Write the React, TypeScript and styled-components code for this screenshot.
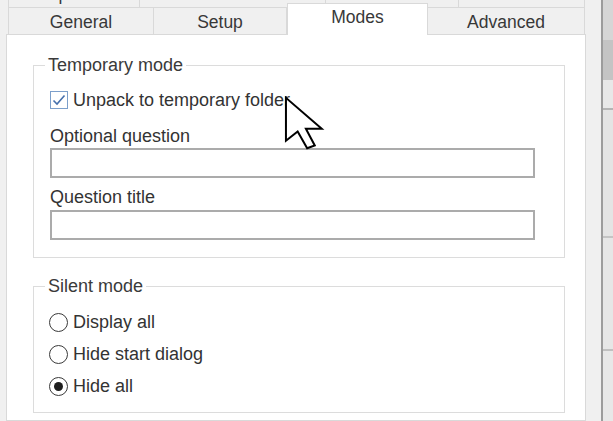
import styled, { createGlobalStyle } from 'styled-components';

const GlobalStyle = createGlobalStyle`
  html, body {
    margin: 0;
    padding: 0;
    background: #f0f0f0;
  }
  body {
    font-family: 'Liberation Sans', Arial, sans-serif;
    color: #333;
  }
`;

const Window = styled.div`
  position: relative;
  width: 613px;
  height: 421px;
  overflow: hidden;
  display: flex;
  box-sizing: border-box;
  padding-left: 6px;
  background: #f0f0f0;
`;

const TabControl = styled.div`
  width: 582px;
  display: flex;
  flex-direction: column;
`;

const TabRow = styled.div<{ $top?: boolean }>`
  display: flex;
  align-items: flex-end;
  padding-left: 2px;
  height: ${({ $top }) => ($top ? '22px' : '27px')};
  margin-top: ${({ $top }) => ($top ? '-15px' : '0')};
  position: relative;
  z-index: 1;
`;

const Tab = styled.div<{ $width: number; $active?: boolean; $top?: boolean }>`
  width: ${({ $width }) => $width}px;
  height: ${({ $active }) => ($active ? '32px' : '100%')};
  margin-bottom: ${({ $active }) => ($active ? '-1px' : '0')};
  padding: ${({ $active, $top }) =>
    $active ? '0 0 4px 0' : $top ? '0 0 5px 0' : '3px 0 0 0'};
  box-sizing: border-box;
  display: flex;
  align-items: center;
  justify-content: center;
  font-size: 17.5px;
  color: #383838;
  background: ${({ $active }) => ($active ? '#ffffff' : '#f0f0f0')};
  border: 1px solid #d9d9d9;
  border-bottom: none;
  border-left: ${({ $active }) => ($active ? '1px solid #d9d9d9' : 'none')};
  &:first-child {
    border-left: 1px solid #d9d9d9;
  }
`;

const Pane = styled.div`
  flex: 1;
  background: #ffffff;
  border: 1px solid #d9d9d9;
  padding: 20px 20px 0 26px;
  display: flex;
  flex-direction: column;
`;

const Group = styled.fieldset<{ $gap?: number }>`
  margin: ${({ $gap }) => ($gap ?? 0)}px 0 0 0;
  padding: 0 29px 0 16px;
  min-width: 0;
  border: 1px solid #dcdcdc;
`;

const Legend = styled.legend`
  margin-left: -5px;
  padding: 0 3px;
  font-size: 18px;
  line-height: 20px;
  color: #3a3a3a;
`;

const CheckRow = styled.label<{ $mt: number; $h?: number }>`
  display: flex;
  align-items: center;
  gap: 5px;
  height: ${({ $h }) => $h ?? 24}px;
  margin-top: ${({ $mt }) => $mt}px;
  font-size: 18px;
  color: #333;
`;

const Box = styled.span`
  width: 18px;
  height: 18px;
  box-sizing: border-box;
  border: 1.5px solid #7c9fcb;
  display: flex;
  align-items: center;
  justify-content: center;
  background: #fff;
`;

const Radio = styled.span<{ $on?: boolean }>`
  width: 19px;
  height: 19px;
  margin-left: -1px;
  box-sizing: border-box;
  border: 1.5px solid #3a3a3a;
  border-radius: 50%;
  display: flex;
  align-items: center;
  justify-content: center;
  &::after {
    content: '';
    display: ${({ $on }) => ($on ? 'block' : 'none')};
    width: 9px;
    height: 9px;
    border-radius: 50%;
    background: #1e1e1e;
  }
`;

const FieldLabel = styled.div<{ $mt: number }>`
  margin-top: ${({ $mt }) => $mt}px;
  font-size: 18px;
  line-height: 20px;
  color: #333;
`;

const TextBox = styled.div<{ $mt: number }>`
  margin-top: ${({ $mt }) => $mt}px;
  height: 30px;
  box-sizing: border-box;
  border: 2px solid #ababab;
  background: #fff;
`;

const RightEdge = styled.div`
  width: 10px;
  margin-left: 15px;
  border-left: 2px solid #9c9c9c;
  background: linear-gradient(
    to bottom,
    #d6d6d6 0px,
    #d6d6d6 40px,
    #c4c4c4 40px,
    #c4c4c4 80px,
    #e8e8e8 80px,
    #e8e8e8 108px,
    #b4b4b4 108px,
    #b4b4b4 110px,
    #e4e4e4 110px,
    #e4e4e4 236px,
    #c4c4c4 236px,
    #c4c4c4 238px,
    #e6e6e6 238px,
    #e6e6e6 349px,
    #c0c0c0 349px,
    #c0c0c0 351px,
    #e8e8e8 351px
  );
`;

const Pointer = styled.svg`
  position: absolute;
  left: 285px;
  top: 97px;
  width: 38px;
  height: 52px;
  overflow: visible;
`;

const topTabs = [
  { label: 'Update', width: 132 },
  { label: 'Text and icon', width: 186 },
  { label: 'License', width: 133 },
  { label: 'Module', width: 126 },
];

const mainTabs = [
  { label: 'General', width: 146 },
  { label: 'Setup', width: 133 },
  { label: 'Modes', width: 141, active: true },
  { label: 'Advanced', width: 157 },
];

const radios = [
  { label: 'Display all', mt: 10 },
  { label: 'Hide start dialog', mt: 0 },
  { label: 'Hide all', mt: 0, on: true },
];

const App = () => {
  return (
    <>
      <GlobalStyle />
      <Window>
        <TabControl>
          <TabRow $top>
            {topTabs.map((t) => (
              <Tab key={t.label} $width={t.width} $top>
                {t.label}
              </Tab>
            ))}
          </TabRow>
          <TabRow>
            {mainTabs.map((t) => (
              <Tab key={t.label} $width={t.width} $active={t.active}>
                {t.label}
              </Tab>
            ))}
          </TabRow>
          <Pane>
            <Group>
              <Legend>Temporary mode</Legend>
              <CheckRow $mt={13}>
                <Box>
                  <svg width="14" height="12" viewBox="0 0 14 12">
                    <path d="M1.5 6.5 L5 10 L12.5 1.5" fill="none" stroke="#4670ad" strokeWidth="1.6" />
                  </svg>
                </Box>
                Unpack to temporary folder
              </CheckRow>
              <FieldLabel $mt={14}>Optional question</FieldLabel>
              <TextBox $mt={2} />
              <FieldLabel $mt={9}>Question title</FieldLabel>
              <TextBox $mt={3} />
              <div style={{ height: 17 }} />
            </Group>
            <Group $gap={18}>
              <Legend>Silent mode</Legend>
              {radios.map((r) => (
                <CheckRow key={r.label} $mt={r.mt} $h={32}>
                  <Radio $on={r.on} />
                  {r.label}
                </CheckRow>
              ))}
              <div style={{ height: 10 }} />
            </Group>
          </Pane>
        </TabControl>
        <RightEdge />
        <Pointer viewBox="0 0 12 19" preserveAspectRatio="none">
          <path
            d="M0.3 0.3 L0.3 16 L4 12.6 L7 18.7 L9.4 17.7 L6.6 11.6 L11.6 11.6 Z"
            fill="#ffffff"
            stroke="#000000"
            strokeWidth="2"
            vectorEffect="non-scaling-stroke"
            strokeLinejoin="miter"
          />
        </Pointer>
      </Window>
    </>
  );
};

export default App;
